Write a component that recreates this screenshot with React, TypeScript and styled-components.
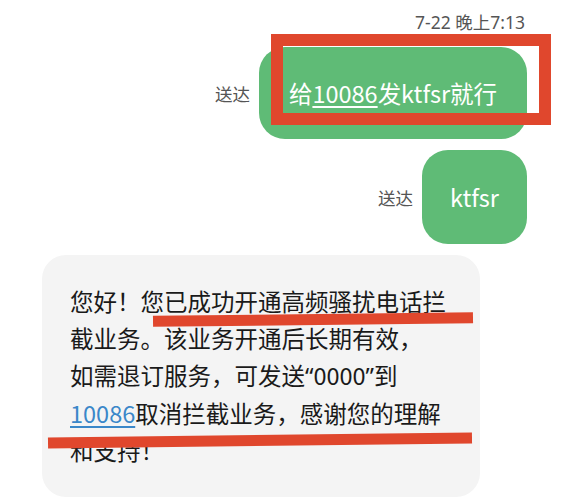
import React from "react";
import styled, { createGlobalStyle } from "styled-components";

const Global = createGlobalStyle`
  html, body { margin: 0; padding: 0; background: #ffffff; }
  body { font-family: "Noto Sans CJK SC", "Noto Sans", sans-serif; }
`;

const Page = styled.div`
  position: relative;
  width: 568px;
  height: 499px;
  overflow: hidden;
  display: flex;
  flex-direction: column;
`;

const Time = styled.div`
  align-self: flex-end;
  margin-right: 43px;
  height: 42px;
  display: flex;
  align-items: center;
  font-size: 17.5px;
  color: #555555;
  font-family: "Noto Sans", "Noto Sans CJK SC", sans-serif;
`;

const SentRow = styled.div<{ $top: number }>`
  display: flex;
  justify-content: flex-end;
  align-items: center;
  gap: 9px;
  padding-right: 41px;
  margin-top: ${(p) => p.$top}px;
`;

const Status = styled.span`
  font-size: 17.5px;
  color: #555555;
`;

const SentBubble = styled.div<{ $w: number; $h: number }>`
  width: ${(p) => p.$w}px;
  height: ${(p) => p.$h}px;
  box-sizing: border-box;
  background: #5fbb76;
  border-radius: 26px;
  color: #ffffff;
  font-size: 23.5px;
  display: flex;
  align-items: center;
  justify-content: center;
  white-space: nowrap;
`;

const WhiteLink = styled.span`
  text-decoration: underline;
  text-underline-offset: 3px;
  text-decoration-thickness: 1.5px;
`;

const Received = styled.div`
  margin-top: 11px;
  margin-left: 42px;
  width: 438px;
  height: 242px;
  box-sizing: border-box;
  padding: 28px 0 0 28px;
  background: #f4f4f4;
  border-radius: 24px;
  color: #1a1a1a;
  font-size: 23.5px;
  line-height: 37px;
  white-space: nowrap;
`;

const Quote = styled.span`
  font-family: "Noto Sans", sans-serif;
`;

const BlueLink = styled.span`
  color: #3a87c9;
  text-decoration: underline;
  text-underline-offset: 3px;
  text-decoration-thickness: 1.5px;
`;

const RedBox = styled.div`
  position: absolute;
  left: 271px;
  top: 34px;
  width: 280px;
  height: 91px;
  box-sizing: border-box;
  border: 12.5px solid #e0472d;
`;

const RedStroke = styled.div<{ $l: number; $t: number; $w: number; $h: number }>`
  position: absolute;
  left: ${(p) => p.$l}px;
  top: ${(p) => p.$t}px;
  width: ${(p) => p.$w}px;
  height: ${(p) => p.$h}px;
  background: #e0472d;
  transform: rotate(-0.65deg);
  transform-origin: center;
`;

export default function App() {
  return (
    <>
      <Global />
      <Page>
        <Time>7-22 晚上7:13</Time>
        <SentRow $top={5}>
          <Status>送达</Status>
          <SentBubble $w={268} $h={92}>
            给<WhiteLink>10086</WhiteLink>发ktfsr就行
          </SentBubble>
        </SentRow>
        <SentRow $top={11}>
          <Status>送达</Status>
          <SentBubble $w={105} $h={94}>ktfsr</SentBubble>
        </SentRow>
        <Received>
          您好！您已成功开通高频骚扰电话拦
          <br />
          截业务。该业务开通后长期有效，
          <br />
          如需退订服务，可发送<Quote>“</Quote>0000<Quote>”</Quote>到
          <br />
          <BlueLink>10086</BlueLink>取消拦截业务，感谢您的理解
          <br />
          和支持！
        </Received>
        <RedBox />
        <RedStroke $l={153} $t={314} $w={320} $h={11} />
        <RedStroke $l={48} $t={435} $w={424} $h={11} />
      </Page>
    </>
  );
}
